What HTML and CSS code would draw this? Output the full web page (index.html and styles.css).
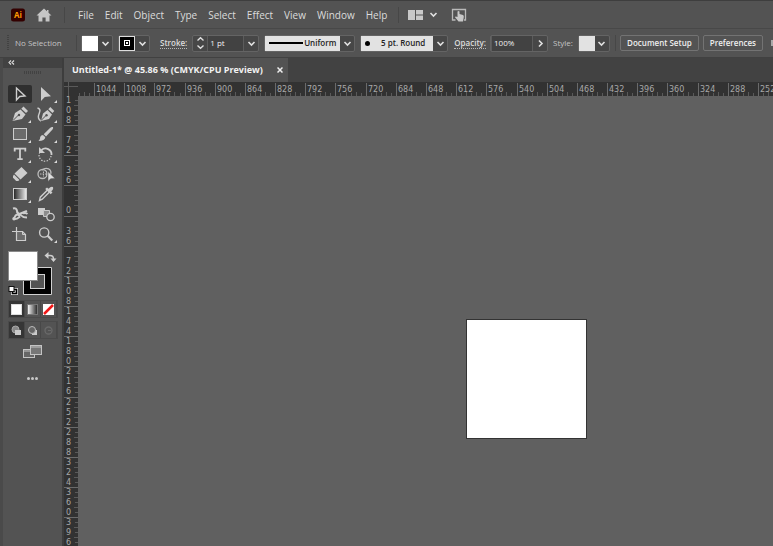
FILE: index.html
```html
<!DOCTYPE html>
<html lang="en">
<head>
<meta charset="utf-8">
<title>Untitled-1</title>
<link rel="stylesheet" href="styles.css">
</head>
<body>
<svg width="0" height="0" class="defs" aria-hidden="true">
  <defs>
    <symbol id="chev" viewBox="0 0 9 9"><path d="M1.5 3 4.5 6 7.5 3" fill="none" stroke="#e0e0e0" stroke-width="1.6"/></symbol>
    <symbol id="corner" viewBox="0 0 3 3"><path d="M3 0V3H0z" fill="#d8d8d8"/></symbol>
    <linearGradient id="g1"><stop offset="0" stop-color="#222"/><stop offset="1" stop-color="#eee"/></linearGradient>
    <linearGradient id="g2"><stop offset="0" stop-color="#fff"/><stop offset="1" stop-color="#222"/></linearGradient>
  </defs>
</svg>
<div class="app">
  <header class="menubar">
    <svg class="logo" width="14" height="14" viewBox="0 0 14 14"><rect width="14" height="13" y="0.5" rx="2.5" fill="#300"/><text x="7" y="10" text-anchor="middle" class="logo-text">Ai</text></svg>
    <button class="home" aria-label="Home"><svg width="16" height="14" viewBox="0 0 16 14"><path d="M8 0.5 0.5 7.5H2.5V13.5H6.4V9.5H9.6V13.5H13.5V7.5H15.5L12.5 4.7V2H11V3.3z" fill="#c6c6c6"/></svg></button>
    <span class="sep"></span>
    <nav class="menus">
      <button>File</button><button>Edit</button><button>Object</button><button>Type</button><button>Select</button><button>Effect</button><button>View</button><button>Window</button><button>Help</button>
    </nav>
    <span class="sep"></span>
    <button class="arrange" aria-label="Arrange documents"><svg width="15" height="10" viewBox="0 0 15 10"><path d="M0 0H7V10H0zM8 0H15V4.5H8zM8 5.5H15V10H8z" fill="#c8c8c8"/></svg><svg width="9" height="9"><use href="#chev"/></svg></button>
    <button class="touch" aria-label="Touch workspace"><svg width="16" height="14" viewBox="0 0 16 14"><path d="M4.500 12H1.500V1.500H14.500V12H13" fill="none" stroke="#b9b9b9" stroke-width="1.3"/><path d="M6.5 3.5Q7.5 2.5 8.5 3.5V6L12 7Q13 7.5 12.8 9L12 13.5H7.5L4 9.2Q4.2 8 6.5 9z" fill="#c8c8c8"/></svg></button>
  </header>

  <section class="controlbar">
    <span class="grip"></span>
    <span class="state">No Selection</span>
    <span class="sep"></span>
    <div class="combo fillc"><span class="sw white"></span><button aria-label="Fill"><svg width="9" height="9"><use href="#chev"/></svg></button></div>
    <div class="combo strokec"><span class="sw black"><svg width="6" height="6"><rect x="0.5" y="0.5" width="5" height="5" fill="none" stroke="#fff"/><rect x="2" y="2" width="2" height="2" fill="#fff"/></svg></span><button aria-label="Stroke colour"><svg width="9" height="9"><use href="#chev"/></svg></button></div>
    <label class="link" for="weight">Stroke:</label>
    <div class="combo weight"><button class="step" aria-label="Step weight"><svg width="9" height="14" viewBox="0 0 9 14"><path d="M1.5 4.5 4.5 1.8 7.5 4.5M1.5 9.5 4.5 12.2 7.5 9.5" fill="none" stroke="#e0e0e0" stroke-width="1.4"/></svg></button><input id="weight" value="1 pt"><button aria-label="Weights"><svg width="9" height="9"><use href="#chev"/></svg></button></div>
    <div class="combo profile"><span class="light"><i class="line"></i>Uniform</span><button aria-label="Width profile"><svg width="9" height="9"><use href="#chev"/></svg></button></div>
    <div class="combo brush"><span class="light"><i class="dot"></i>5 pt. Round</span><button aria-label="Brush"><svg width="9" height="9"><use href="#chev"/></svg></button></div>
    <label class="link" for="opacity">Opacity:</label>
    <div class="combo opacity"><input id="opacity" value="100%"><button aria-label="Opacity slider"><svg width="9" height="9" viewBox="0 0 9 9"><path d="M3 1.5 6 4.5 3 7.5" fill="none" stroke="#e0e0e0" stroke-width="1.6"/></svg></button></div>
    <span class="stylelabel">Style:</span>
    <div class="combo stylec"><span class="sw pale"></span><button aria-label="Style"><svg width="9" height="9"><use href="#chev"/></svg></button></div>
    <span class="sep"></span>
    <button class="action setup">Document Setup</button>
    <button class="action prefs">Preferences</button>
    <span class="more"></span>
  </section>

  <main class="workspace">
    <aside class="tools">
      <div class="toolhead"><svg width="7" height="5" viewBox="0 0 7 5"><path d="M3 .5 1 2.5 3 4.5M6 .5 4 2.5 6 4.5" fill="none" stroke="#ddd" stroke-width="1.1"/></svg></div>
      <div class="toolgrip"></div>
      <div class="toolgrid">
        <button class="on" aria-label="Selection"><svg viewBox="0 0 24 18"><path d="M8.5 3V15L11.7 11.5 17 11z" fill="none" stroke="#cfcfcf" stroke-width="1.4"/></svg></button>
        <button aria-label="Direct selection"><svg viewBox="0 0 24 18"><path d="M7 2V16L10.8 12 17 11.3z" fill="#cdcdcd"/><use href="#corner" x="20" y="15" width="3" height="3"/></svg></button>
        <button aria-label="Pen"><svg viewBox="0 0 24 18"><path d="M4.500 16 7 8 12.500 4.500 17.500 9.500 14 14z" fill="#cdcdcd"/><path d="M13.300 3.800 15.500 1.500 20 6 18 8z" fill="#cdcdcd"/><path d="M5 15.500 10.500 10" stroke="#535353"/><circle cx="11" cy="10" r="1.2" fill="#535353"/><use href="#corner" x="20" y="15" width="3" height="3"/></svg></button>
        <button aria-label="Curvature"><svg viewBox="0 0 24 18"><path d="M3.500 3Q7 4 5.500 7.500T4.500 13 7 16" fill="none" stroke="#cdcdcd" stroke-width="1.4"/><path d="M7 16 9 8.5 13.500 5 18 9.500 15 14z" fill="#cdcdcd"/><path d="M14.300 4.200 16.300 2 20.300 6 18.500 8z" fill="#cdcdcd"/><path d="M7 15.500 12 10.500" stroke="#535353"/><circle cx="12.5" cy="10.2" r="1.2" fill="#535353"/><use href="#corner" x="20" y="15" width="3" height="3"/></svg></button>
        <button aria-label="Rectangle"><svg viewBox="0 0 24 18"><rect x="5.5" y="3.5" width="13" height="11" fill="#6b6b6b" stroke="#cdcdcd"/><use href="#corner" x="20" y="15" width="3" height="3"/></svg></button>
        <button aria-label="Paintbrush"><svg viewBox="0 0 24 18"><path d="M19 2Q17.5 1.5 16 3L9.7 9.2 12 11.5 18.5 4.5Q19.5 3 19 2" fill="#cdcdcd"/><path d="M9 10 11.3 12.3Q11 16 4.500 16 6.5 14 6.2 12 7 10 9 10" fill="#cdcdcd"/><use href="#corner" x="20" y="15" width="3" height="3"/></svg></button>
        <button aria-label="Type"><svg viewBox="0 0 24 18"><path d="M6.7 6.5V3.7H17.3V6.5M12 3.7V14M9.3 14.2H14.7" fill="none" stroke="#cdcdcd" stroke-width="1.8"/><use href="#corner" x="20" y="15" width="3" height="3"/></svg></button>
        <button aria-label="Rotate"><svg viewBox="0 0 24 18"><path d="M7.5 5A6 6 0 0 1 17.5 10" fill="none" stroke="#cdcdcd" stroke-width="1.8"/><path d="M17 11A6 6 0 1 1 6 7" fill="none" stroke="#cdcdcd" stroke-width="1.2" stroke-dasharray="1.4 1.4"/><path d="M5 2V8H11z" fill="#cdcdcd"/><use href="#corner" x="20" y="15" width="3" height="3"/></svg></button>
        <button aria-label="Eraser"><svg viewBox="0 0 24 18"><path d="M13.5 2 19.500 8 12.5 14.500 6.500 8.5z" fill="#cdcdcd"/><path d="M6 9.5 11.5 15 10.2 16H8.2L5 12.800V11z" fill="#cdcdcd"/><use href="#corner" x="20" y="15" width="3" height="3"/></svg></button>
        <button aria-label="Shape builder"><svg viewBox="0 0 24 18"><circle cx="8.500" cy="9" r="4.5" fill="none" stroke="#bdbdbd" stroke-width="1.3"/><path d="M8 5Q11 2.500 14.500 3.800 18 6 16.500 9.500" fill="none" stroke="#bdbdbd" stroke-width="1.3"/><path d="M6 9H13M9.5 6.500V12M12.500 6V12" stroke="#bdbdbd" stroke-dasharray="1.5 1"/><path d="M14 6.5V16.500L16.6 13.8 21 13.400z" fill="#ddd" stroke="#535353" stroke-width=".5"/></svg></button>
        <button aria-label="Gradient"><svg viewBox="0 0 24 18"><rect x="5.5" y="3.5" width="13" height="11" fill="url(#g1)" stroke="#cdcdcd"/><use href="#corner" x="20" y="15" width="3" height="3"/></svg></button>
        <button aria-label="Eyedropper"><svg viewBox="0 0 24 18"><path d="M13.5 5 6.3 12.2 5.5 15.500 8.3 14.2 15.5 7" fill="none" stroke="#cdcdcd" stroke-width="1.4"/><path d="M11.2 4 13 2.4 14.5 3.8Q17 1 18.9 2 20 4 17.2 6.3L18.5 7.5 16.7 9.2z" fill="#cdcdcd"/></svg></button>
        <button aria-label="Puppet warp"><svg viewBox="0 0 24 18"><path d="M5 3.5Q8.500 2.5 9 6T12.500 8.5 19 6" fill="none" stroke="#cdcdcd" stroke-width="2"/><path d="M6 14Q7 9.500 10 9.500T14 11 19 12.500M9 6.5 11.500 12Q8.500 14.500 6 14M15 8.500Q18 7.500 19.500 9" fill="none" stroke="#cdcdcd" stroke-width="1.8"/><circle cx="6" cy="13.8" r="1.7" fill="#cdcdcd"/></svg></button>
        <button aria-label="Blend"><svg viewBox="0 0 24 18"><rect x="4" y="3" width="7" height="7" fill="#cdcdcd"/><path d="M9.500 5.500H15.500V11.500H9.500z" fill="#8c8c8c" stroke="#c6c6c6"/><circle cx="16.500" cy="12" r="3.7" fill="#535353" stroke="#cdcdcd" stroke-width="1.3"/></svg></button>
        <button aria-label="Artboard"><svg viewBox="0 0 24 18"><path d="M8.500 2V6M4 6.500H8" stroke="#cdcdcd" stroke-width="1.2"/><path d="M8.5 6.5H14.5L17.5 9.5V15.5H8.5z" fill="#6b6b6b" stroke="#cdcdcd" stroke-width="1.2"/><path d="M14.5 6.5V9.5H17.5" fill="none" stroke="#cdcdcd"/></svg></button>
        <button aria-label="Zoom"><svg viewBox="0 0 24 18"><circle cx="10.2" cy="7.5" r="4.6" fill="none" stroke="#cdcdcd" stroke-width="1.4"/><path d="M13.6 10.8 18.3 15.500" stroke="#cdcdcd" stroke-width="2.2"/><use href="#corner" x="20" y="15" width="3" height="3"/></svg></button>
      </div>
      <svg class="fillstroke" width="50" height="47" viewBox="0 0 50 47" role="img" aria-label="Fill and stroke">
        <path d="M15.500 16.500H43.500V43.500H15.500z" fill="#000" stroke="#d0d0d0"/><rect x="22.500" y="23.500" width="14" height="14" fill="#535353" stroke="#d0d0d0"/>
        <rect x="0.500" y="0.500" width="29" height="29" fill="#fff" stroke="#8a8a8a"/>
        <path d="M40 4.500H42Q45.500 4.500 45.500 8" fill="none" stroke="#cdcdcd" stroke-width="1.500"/><path d="M40.500 1V8L36.500 4.500zM42.500 7.500H48.500L45.500 11z" fill="#cdcdcd"/>
        <path d="M4.500 38.500H8.500V42.500H4.500z" fill="none" stroke="#ddd" stroke-width="3"/><path d="M4.500 38.500H8.500V42.500H4.500z" fill="none" stroke="#000" stroke-width="1.500"/><rect x="1" y="35.500" width="5" height="5" fill="#fff" stroke="#111"/>
      </svg>
      <div class="modes color">
        <button class="on" aria-label="Color"><svg width="11" height="11"><rect x="0.500" y="0.500" width="10" height="10" fill="#fff" stroke="#ddd"/></svg></button>
        <button aria-label="Gradient fill"><svg width="11" height="11"><rect x="0.500" y="0.500" width="10" height="10" fill="url(#g2)" stroke="#777"/></svg></button>
        <button aria-label="None"><svg width="11" height="11"><rect width="11" height="11" fill="#fff"/><path d="M1 10 10 1" stroke="#f01818" stroke-width="2.500"/></svg></button>
      </div>
      <div class="modes draw">
        <button class="on" aria-label="Draw normal"><svg width="11" height="11"><circle cx="4.500" cy="4.500" r="3.500" fill="#888" stroke="#aaa"/><rect x="4" y="5" width="6" height="5" fill="#ccc"/></svg></button>
        <button aria-label="Draw behind"><svg width="11" height="11"><rect x="5" y="5" width="5" height="5" fill="#ccc"/><circle cx="5" cy="5" r="3.500" fill="#666" stroke="#bbb"/></svg></button>
        <button aria-label="Draw inside"><svg width="11" height="11"><circle cx="5.500" cy="5.500" r="3.500" fill="none" stroke="#6a6a6a" stroke-width="1.300"/><path d="M5 5.500H8" stroke="#6a6a6a"/></svg></button>
      </div>
      <button class="screen" aria-label="Screen mode"><svg width="19" height="14"><rect x="0.500" y="4.500" width="11" height="8" fill="#666" stroke="#c4c4c4"/><path d="M0 6H12" stroke="#c4c4c4"/><rect x="7.500" y="0.500" width="11" height="9" fill="#777" stroke="#c4c4c4"/><path d="M7 2H19" stroke="#c4c4c4"/></svg></button>
      <button class="dots" aria-label="Edit toolbar"><svg width="11" height="3"><circle cx="1.500" cy="1.500" r="1.500"/><circle cx="5.500" cy="1.500" r="1.500"/><circle cx="9.500" cy="1.500" r="1.500"/></svg></button>
    </aside>
    <section class="document">
      <div class="tabs"><div class="tab"><span>Untitled-1* @ 45.86 % (CMYK/CPU Preview)</span><button aria-label="Close"><svg width="6" height="6"><path d="M.5.5 5.500 5.500M5.500.5.5 5.500" stroke="#eee" stroke-width="1.500"/></svg></button></div></div>
      <div class="stage">
        <div class="origin"></div>
        <div class="ruler"><svg id="hruler" width="100%" height="14"></svg></div>
        <div class="ruler"><svg id="vruler" width="14" height="100%"></svg></div>
        <div class="canvas"><div class="artboard"></div></div>
      </div>
    </section>
  </main>
</div>
<script src="rulers.js"></script>
</body>
</html>
```
FILE: rulers.js
```js
// Rulers count in steps of 36 pt at the current zoom, six ticks to a step.
(function () {
  var NS = "http://www.w3.org/2000/svg";
  var STEP = 30.18;
  function add(parent, name, attrs, text) {
    var el = document.createElementNS(NS, name);
    for (var k in attrs) el.setAttribute(k, attrs[k]);
    if (text !== undefined) el.textContent = text;
    parent.appendChild(el);
  }
  var h = document.getElementById("hruler");
  var v = document.getElementById("vruler");
  function draw() {
    h.replaceChildren();
    v.replaceChildren();
    var width = h.parentNode.clientWidth;
    var height = v.parentNode.clientHeight;
    for (var i = -1; i * STEP + 16 < width; i++) {
      for (var t = 0; t < 6; t++) {
        var x = Math.round(16 + (i + t / 6) * STEP);
        var len = t === 0 ? 13 : t % 2 ? 3 : 4;
        if (x >= 0) add(h, "rect", { x: x, y: 14 - len, width: 1, height: len, class: t ? "minor" : "major" });
      }
      if (i >= 0) add(h, "text", { x: Math.round(16 + i * STEP) + 2, y: 10 }, Math.abs(1044 - 36 * i));
    }
    for (var j = -1; j * STEP + 29 < height; j++) {
      var y0 = Math.round(29 + j * STEP);
      for (var s = 0; s < 6; s++) {
        var y = Math.round(29 + (j + s / 6) * STEP);
        var w = s === 0 ? 14 : s % 2 ? 3 : 4;
        if (y >= 0) add(v, "rect", { x: 14 - w, y: y, width: w, height: 1, class: s ? "minor" : "major" });
      }
      var digits = String(Math.abs(72 - 36 * j)).padStart(3, " ");
      for (var d = 0; d < 3; d++) {
        var base = y0 + 8 + d * 10;
        if (digits[d] !== " " && base - 6 < height) add(v, "text", { x: 2, y: base }, digits[d]);
      }
    }
  }
  draw();
  window.addEventListener("resize", draw);
})();
```
FILE: styles.css
```css
* { box-sizing: border-box; }
body { margin: 0; background: #535353; color: #dcdcdc; font: 8px/12px "Open Sans", "Noto Sans", sans-serif; }
.defs { position: absolute; }
button { margin: 0; padding: 0; border: 0; background: none; color: inherit; font: inherit; display: flex; align-items: center; justify-content: center; }
svg { display: block; flex: none; }
.app { height: 100vh; display: flex; flex-direction: column; overflow: hidden; }
.sep { width: 1px; height: 16px; background: #474747; flex: none; }

.menubar { height: 28px; flex: none; display: flex; align-items: center; padding-left: 11px; border-top: 1px solid #3e3e3e; }
.logo-text { font: 700 8px "Open Sans", sans-serif; fill: #ff9a00; }
.home { margin: 0 12px 0 11px; }
.menus { display: flex; gap: 11px; margin: 0 11px 0 13px; font-size: 10px; line-height: 14px; }
.arrange { gap: 6px; margin: 0 13px 0 9px; }

.controlbar { height: 30px; flex: none; display: flex; align-items: center; border-top: 1px solid #484848; border-bottom: 1px solid #414141; padding-left: 7px; white-space: nowrap; }
.controlbar > * { flex: none; }
.grip { width: 2px; height: 16px; background: repeating-linear-gradient(#424242 0 1px, #535353 1px 2px); }
.state { width: 67px; padding-left: 6px; color: #c4c4c4; }
.controlbar .combo { display: flex; height: 17px; border: 1px solid #646464; border-radius: 2px; background: #474747; }
.combo button { width: 14px; flex: none; }
.combo input { flex: 1; min-width: 0; border: 0; border-left: 1px solid #5c5c5c; border-right: 1px solid #5c5c5c; padding: 0 2px; background: #424242; color: #f0f0f0; font: inherit; }
.sw { flex: 1; display: flex; align-items: center; justify-content: center; }
.white { background: #fff; }
.black { background: #000; border: 1px solid #ddd; }
.pale { background: #e2e2e2; }
.fillc { width: 32px; margin: 0 5px 0 4px; }
.strokec { width: 32px; }
.link { margin: 0 5px 0 10px; font-weight: 600; line-height: 11px; border-bottom: 1px dotted #b8b8b8; }
.weight { width: 67px; }
.profile { width: 91px; margin: 0 5px; }
.brush { width: 88px; }
.brush + .link { margin: 0 4px 0 6px; }
.light { flex: 1; display: flex; align-items: center; justify-content: space-between; padding: 0 4px; background: #e2e2e2; color: #222; font-weight: 600; }
.line { width: 34px; height: 2px; background: #000; }
.brush .light { padding-right: 8px; }
.dot { width: 5px; height: 5px; border-radius: 3px; background: #000; }
.opacity { width: 58px; }
.stylelabel { margin: 0 5px; color: #c4c4c4; }
.stylec { width: 32px; margin-right: 5px; }
.action { height: 16px; border: 1px solid #737373; border-radius: 2px; font-weight: 600; color: #eee; }
.setup { width: 79px; margin: 0 4px; }
.prefs { width: 60px; }
.more { width: 2px; height: 6px; margin-left: 8px; background: #aaa; }

.workspace { flex: 1; min-height: 0; display: flex; }
.tools { width: 64px; flex: none; border-left: 3px solid #4a4a4a; border-right: 2px solid #3d3d3d; display: flex; flex-direction: column; align-items: center; }
.toolhead { align-self: stretch; height: 10px; padding: 2px 5px; background: #424242; }
.toolgrip { width: 17px; height: 3px; margin: 3px 0 11px; background: repeating-linear-gradient(90deg, #424242 0 1px, #535353 1px 2px); }
.toolgrid { display: grid; grid-template-columns: 24px 24px; gap: 2px; }
.toolgrid svg { width: 24px; height: 18px; }
.toolgrid .on { background: #2f2f2f; border-radius: 2px; }
.fillstroke { margin-top: 8px; }
.modes { display: flex; margin-top: 2px; border: 1px solid #4a4a4a; }
.modes button { width: 16px; height: 16px; border-right: 1px solid #484848; }
.modes .on { background: #363636; }
.modes.draw { margin-top: 3px; }
.screen { margin-top: 6px; }
.dots { margin-top: 18px; fill: #c8c8c8; }

.document { flex: 1; min-width: 0; display: flex; flex-direction: column; }
.tabs { height: 24px; flex: none; background: #424242; display: flex; }
.tab { width: 224px; padding: 0 5px 0 8px; display: flex; align-items: center; justify-content: space-between; background: #535353; color: #f2f2f2; font-size: 9px; font-weight: 700; white-space: nowrap; }
.stage { flex: 1; min-height: 0; display: grid; grid-template: 14px minmax(0, 1fr) / 14px minmax(0, 1fr); background: #606060; }
.origin, .ruler { background: #323232; overflow: hidden; }
.origin { background: linear-gradient(#5a5a5a, #5a5a5a) 4px 0 / 1px 14px no-repeat, linear-gradient(#5a5a5a, #5a5a5a) 0 4px / 14px 1px no-repeat, #323232; }
.ruler text { font: 8px "DejaVu Sans", sans-serif; fill: #a8a8a8; }
.major { fill: #6a6a6a; }
.minor { fill: #5a5a5a; }
.canvas { position: relative; overflow: hidden; }
.artboard { position: absolute; left: 388px; top: 223px; width: 121px; height: 120px; background: #fff; border: 1px solid #333; }
```
